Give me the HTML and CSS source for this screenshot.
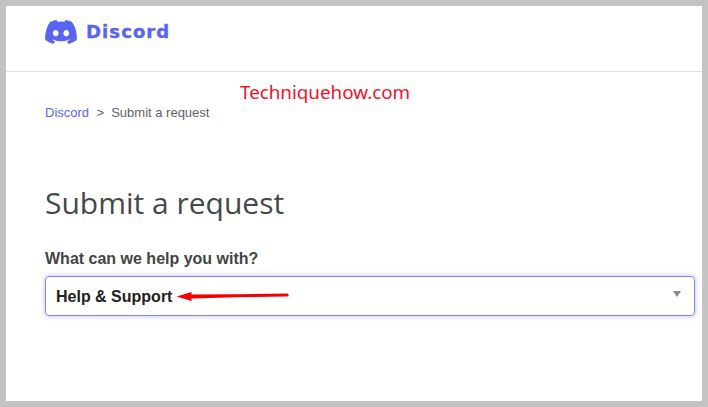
FILE: index.html
```html
<!DOCTYPE html>
<html lang="en">
<head>
<meta charset="utf-8">
<title>Submit a request</title>
<link rel="stylesheet" href="styles.css">
</head>
<body>
<div class="frame">
  <header class="header">
    <a class="logo">
      <svg class="logo-icon" viewBox="0 0 127.14 96.36" aria-hidden="true"><path fill="#5865f2" d="M107.7 8.07A105.15 105.15 0 0 0 81.47 0a72.06 72.06 0 0 0-3.36 6.83 97.68 97.68 0 0 0-29.11 0A72.37 72.37 0 0 0 45.64 0a105.89 105.89 0 0 0-26.25 8.09C2.79 32.65-1.71 56.6.54 80.21a105.73 105.73 0 0 0 32.17 16.15 77.7 77.7 0 0 0 6.89-11.11 68.42 68.42 0 0 1-10.85-5.18c.91-.66 1.8-1.34 2.66-2a75.57 75.57 0 0 0 64.32 0c.87.71 1.76 1.39 2.66 2a68.68 68.68 0 0 1-10.87 5.19 77 77 0 0 0 6.89 11.1 105.25 105.25 0 0 0 32.19-16.14c2.64-27.38-4.51-51.11-18.9-72.15ZM42.45 65.69C36.18 65.69 31 60 31 53s5-12.74 11.43-12.74S54 46 53.89 53s-5.05 12.69-11.44 12.69Zm42.24 0C78.41 65.69 73.25 60 73.25 53s5-12.74 11.44-12.74S96.23 46 96.12 53s-5.04 12.69-11.43 12.69Z"/></svg>
      <span class="logo-text">Discord</span>
    </a>
  </header>
  <main class="main">
    <nav class="crumbs"><a class="crumb-link">Discord</a><span class="crumb-sep">&gt;</span><span>Submit a request</span></nav>
    <h1 class="title">Submit a request</h1>
    <label class="label">What can we help you with?</label>
    <div class="select">
      <span class="select-value">Help &amp; Support</span>
      <span class="caret"></span>
    </div>
  </main>
  <div class="watermark">Techniquehow.com</div>
  <svg class="arrow" viewBox="0 0 113 10" aria-hidden="true"><path fill="#f40000" d="M0 5.5 L15 1 L15 3.6 L60 3.2 L111 2.6 Q113.5 4 111 5.4 L60 6.2 L15 7.4 L15 10 Z"/></svg>
</div>
</body>
</html>
```
FILE: styles.css
```css
* { box-sizing: border-box; }
html, body { margin: 0; padding: 0; }
body { width: 708px; height: 407px; background: #c3c3c3; padding: 6px; overflow: hidden; font-family: "Liberation Sans", Arial, sans-serif; }
.frame { position: relative; width: 696px; height: 395px; background: #fff; }
.header { height: 66px; border-bottom: 1px solid #e1e1e1; padding: 13px 0 0 39px; }
.logo { display: flex; align-items: center; gap: 9px; height: 26px; }
.logo-icon { width: 32px; height: 24px; display: block; }
.logo-text { font-family: "DejaVu Sans", sans-serif; font-weight: 700; font-size: 18px; color: #5865f2; line-height: 24px; letter-spacing: 1.1px; -webkit-text-stroke: .4px #5865f2; }
.main { padding: 33px 7px 0 39px; }
.crumbs { display: flex; font-size: 13px; line-height: 15px; color: #5f6266; }
.crumb-link { color: #5865f2; }
.crumb-sep { margin: 0 7px 0 7.5px; }
.title { margin: 61px 0 0; font-family: "Open Sans", sans-serif; font-weight: 400; font-size: 30px; line-height: 44px; color: #45484c; }
.label { display: block; margin-top: 25px; font-size: 16px; font-weight: 700; line-height: 18px; color: #444; }
.select { margin-top: 8px; height: 40px; display: flex; align-items: center; justify-content: space-between; padding: 0 13px 0 10px; border: 1px solid #7c86f4; border-radius: 4px; box-shadow: 0 0 4px 1px rgba(88,101,242,.3); }
.select-value { font-size: 16px; font-weight: 700; color: #222; padding-top: 1px; }
.caret { width: 0; height: 0; border-left: 4px solid transparent; border-right: 4px solid transparent; border-top: 6px solid #888; margin-top: -4px; }
.watermark { position: absolute; left: 234px; top: 73px; font-family: "Noto Sans", sans-serif; font-size: 18.8px; line-height: 26px; color: #f5102a; }
.arrow { position: absolute; left: 170px; top: 285px; width: 114px; height: 10px; }
```
